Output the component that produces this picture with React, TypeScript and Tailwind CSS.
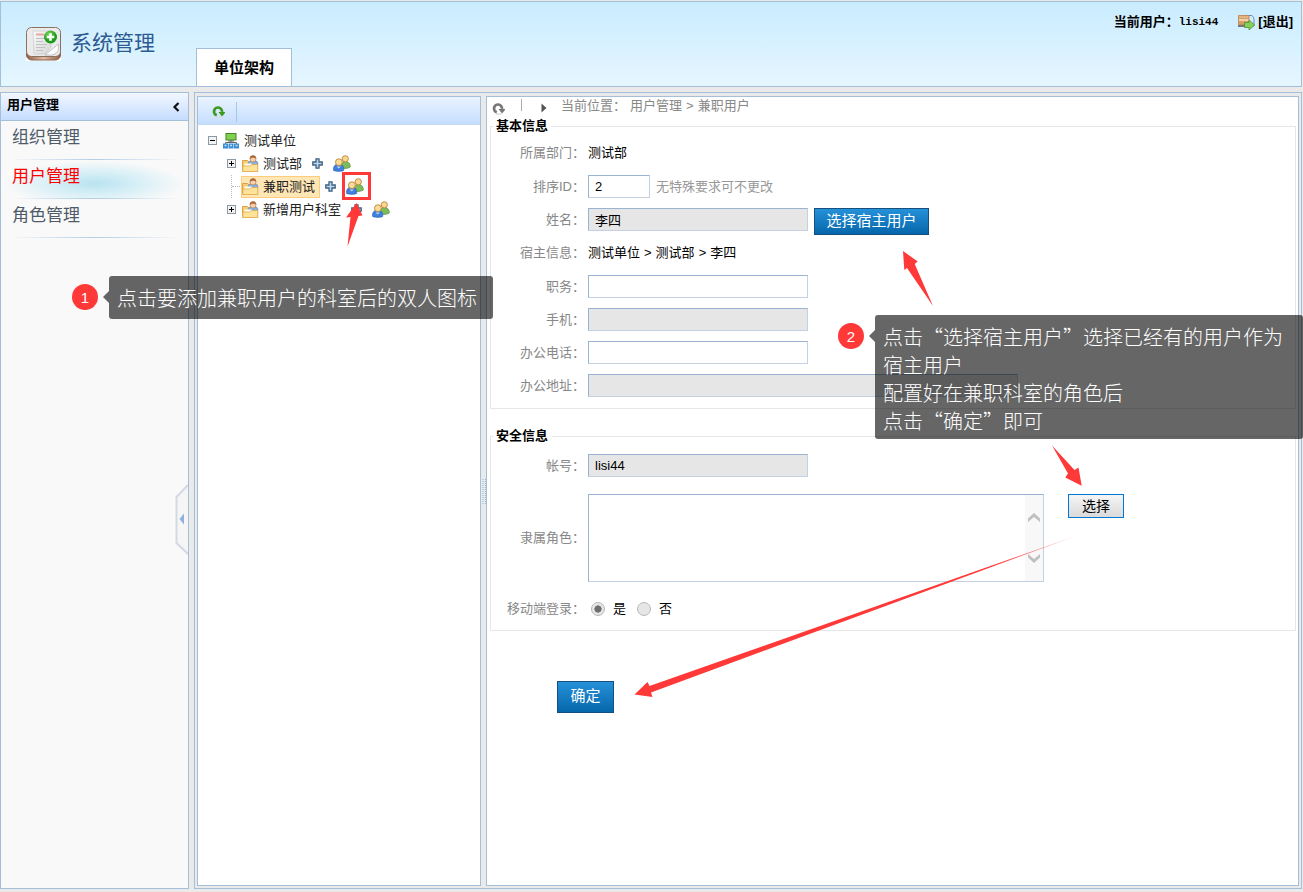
import { useState } from "react";
import type { ReactNode } from "react";

interface TreeNode {
  id: number;
  name: string;
  expandable: boolean;
}

const menu = ["组织管理", "用户管理", "角色管理"];

const departments: TreeNode[] = [
  { id: 1, name: "测试部", expandable: true },
  { id: 2, name: "兼职测试", expandable: false },
  { id: 3, name: "新增用户科室", expandable: true },
];

const inputStyle =
  "h-[23px] border border-t-[#9ab3d0] border-l-[#9ab3d0] border-r-[#c3d1e2] border-b-[#c3d1e2] px-1.5 text-[13px] text-black outline-none read-only:bg-[#e6e6e6]";

const AppLogo = () => (
  <svg width="35" height="34" viewBox="0 0 35 34">
    <defs>
      <linearGradient id="paper" x1="0" y1="0" x2="1" y2="1">
        <stop offset="0" stopColor="#fafafa" />
        <stop offset="1" stopColor="#d6d6d6" />
      </linearGradient>
      <linearGradient id="wood">
        <stop offset="0" stopColor="#8e5f45" />
        <stop offset="0.5" stopColor="#e0bda6" />
        <stop offset="1" stopColor="#8e5f45" />
      </linearGradient>
      <radialGradient id="green" cx="0.4" cy="0.3">
        <stop offset="0" stopColor="#7ddb5c" />
        <stop offset="1" stopColor="#1b9a16" />
      </radialGradient>
    </defs>
    <path d="M0 27h35v7H0z" fill="#fff" />
    <rect x="0.5" y="4" width="34" height="29" rx="5" fill="url(#wood)" stroke="#8e6650" />
    <rect x="0.5" y="0.5" width="34" height="29" rx="5" fill="#ebebeb" stroke="#8d6f60" />
    <path d="M7 4h18v16l-6 7H8z" fill="url(#paper)" stroke="#c4c4c4" strokeWidth="0.6" />
    <path d="M10 7.500h8" stroke="#e8a5a5" strokeWidth="2" />
    <path d="M10 11.500h9M10 14.500h7M10 17.500h11M10 20.500h9M10 23.500h7" stroke="#c2c2c2" />
    <path d="M32.500 17L19 28h7q5.500-1 6.500-6z" fill="#fff" stroke="#ababab" strokeWidth="0.7" />
    <circle cx="24.500" cy="10" r="6.500" fill="url(#green)" />
    <path d="M24.500 6.200v7.600M20.700 10h7.600" stroke="#fff" strokeWidth="2.600" />
  </svg>
);

const LogoutIcon = () => (
  <svg width="17" height="16" viewBox="0 0 17 16">
    <path d="M9 1.500h5q2 1.500 2 4V12H9z" fill="#d6e9fb" stroke="#5f8fc6" />
    <path d="M.5 1.500h10.500v9H.5z" fill="#d9a066" stroke="#b58150" strokeWidth="0.800" />
    <path d="M1 3h9.500" stroke="#eec79b" />
    <path d="M1 6h9.500" stroke="#fff3df" strokeWidth="1.200" />
    <path d="M0 12h9" stroke="#777" strokeWidth="2" />
    <path d="M6.500 8.500H11V6l5.700 5-5.700 5v-2.500H6.500z" fill="#86cf5b" stroke="#4c9130" strokeWidth="0.800" />
  </svg>
);

const RefreshIcon = ({ color }: { color: string }) => (
  <svg width="13" height="13" viewBox="0 0 13 13" fill="none">
    <path d="M3.800 12h6" stroke="#ddd" strokeWidth="1.500" />
    <path d="M4.800 10.300A4 4 0 1 1 10 6.800" stroke={color} strokeWidth="2.700" />
    <path d="M6.500 7h6.500v1L10 11.500z" fill={color} />
  </svg>
);

const ToggleIcon = ({ open }: { open?: boolean }) => (
  <svg width="9" height="9" viewBox="0 0 9 9">
    <rect x="0.500" y="0.500" width="8" height="8" fill="#f3f3f3" stroke="#8d98a5" />
    <path d={open ? "M2 4.500h5" : "M2 4.500h5M4.500 2v5"} stroke="#000" />
  </svg>
);

const OrgIcon = () => (
  <svg width="16" height="16" viewBox="0 0 16 16">
    <rect x="3" y="0.500" width="10" height="6.500" fill="#7ed34b" stroke="#4b7f2c" />
    <path d="M5 8h6M8 7v3M2.500 11V9.500h11V11" fill="none" stroke="#666" />
    <rect x="0" y="10.500" width="5" height="5" fill="#3c8ed2" />
    <rect x="5.500" y="10.500" width="5" height="5" fill="#3c8ed2" />
    <rect x="11" y="10.500" width="5" height="5" fill="#3c8ed2" />
    <path d="M1.500 12.500h2M7 12.500h2M12.500 12.500h2" stroke="#bfe2fb" strokeWidth="1.500" />
  </svg>
);

const DeptIcon = () => (
  <svg width="17" height="17" viewBox="0 0 17 17">
    <path d="M.5 5.500h5l1.500 1.500h8.500v9H.5z" fill="#f7cf70" stroke="#dca045" />
    <path d="M6 9.500c0-3 1.500-4 5-4s5 1 5 4z" fill="#86aede" stroke="#6c8fbd" strokeWidth="0.600" />
    <circle cx="11" cy="4" r="3" fill="#f8cfa8" stroke="#b37648" strokeWidth="0.600" />
    <path d="M7.800 4C7-1 15-1 14.200 4 13.200 2.300 9.500 2.500 7.800 4z" fill="#a9683a" />
    <path d="M2.500 8.500h7.500v4H2.500z" fill="#fffdf3" />
    <path d="M.8 11h7l1.500-1.500h6.500V16.500H.8z" fill="#fde39a" stroke="#e3ab4d" strokeWidth="0.800" />
  </svg>
);

const PlusIcon = () => (
  <svg width="11" height="11" viewBox="0 0 11 11">
    <path
      d="M4 .8h3V4h3.200v3H7v3.200H4V7H.8V4H4z"
      fill="#b9d8f0"
      stroke="#3f5f7d"
      strokeWidth="1.300"
    />
  </svg>
);

const UsersIcon = () => (
  <svg width="18" height="17" viewBox="0 0 18 17">
    <path d="M8.500 13c-1-4 .5-6.500 4-6.500s5 2.500 4.800 5.500c-2 1.500-6 2-8.800 1z" fill="#7dbb5c" stroke="#4f8a35" strokeWidth="0.600" />
    <circle cx="12.300" cy="3.800" r="3.100" fill="#f9d692" stroke="#bb8432" strokeWidth="0.900" />
    <path d="M.6 15.500C0 11.500 2 9 5.700 9s5.600 2.500 5 6.500c-2.700 1.200-7.400 1.200-10.100 0z" fill="#3f7fdd" stroke="#2b5fae" strokeWidth="0.600" />
    <path d="M3.500 11.500l2.200 2 2.200-2z" fill="#b8d4f8" />
    <circle cx="5.900" cy="7.200" r="3.400" fill="#fbdc9c" stroke="#bb8432" strokeWidth="0.900" />
  </svg>
);

const Row = ({
  label,
  htmlFor,
  text,
  children,
}: {
  label: string;
  htmlFor?: string;
  text?: boolean;
  children: ReactNode;
}) => (
  <div className={`flex items-center ${text ? "h-[34px]" : "h-[33px]"}`}>
    <label htmlFor={htmlFor} className="mr-[3px] w-[94px] shrink-0 text-right text-[#888]">
      {label}
    </label>
    {children}
  </div>
);

const Legend = ({ children }: { children: ReactNode }) => (
  <legend className="ml-0.5 px-[3px] leading-[18px] font-bold text-black">{children}</legend>
);

const Header = () => (
  <header className="flex h-[86px] justify-between border border-[#a3bfd9] bg-linear-to-b from-[#c9ecff] to-[#e6f6ff]">
    <div className="flex">
      <div className="flex w-[195px] items-center gap-2.5 pl-[25px]">
        <AppLogo />
        <h1 className="pb-0.5 text-[21px] text-[#2d5a92]">系统管理</h1>
      </div>
      <a
        href="#units"
        className="flex h-[38px] w-24 items-center justify-center self-end border border-b-0 border-[#a3bfd9] bg-white text-[15px] font-bold"
      >
        单位架构
      </a>
    </div>
    <div className="flex h-10 items-center pr-2 font-bold">
      <span>当前用户：</span>
      <span className="font-['Liberation_Mono'] text-[11px]">lisi44</span>
      <a href="#logout" className="ml-5 flex items-center gap-[3px]">
        <LogoutIcon />
        <span>[退出]</span>
      </a>
    </div>
  </header>
);

const Sidebar = () => (
  <aside className="relative w-[189px] shrink-0 border border-[#a3bfd9] bg-[#f9f9f9]">
    <div className="flex h-7 items-center justify-between border-b border-[#a3bfd9] bg-linear-to-b from-[#f2f7ff] to-[#c5ddff] pr-2 pl-1.5 font-bold">
      <h2 className="pb-1">用户管理</h2>
      <button type="button" aria-label="收起菜单">
        <svg width="8" height="10" viewBox="0 0 8 10">
          <path d="M6.500 1L2.500 5l4 4" fill="none" stroke="#111" strokeWidth="2.200" />
        </svg>
      </button>
    </div>
    <ul>
      {menu.map((item) => (
        <li
          key={item}
          className={
            item === "用户管理"
              ? "bg-[radial-gradient(ellipse_at_50%_60%,#b9e3f0_0%,#d9f0f7_35%,transparent_68%)]"
              : ""
          }
        >
          <a
            href="#menu"
            className={`block h-[38px] px-[11px] pt-[5px] text-[17px] leading-6 ${
              item === "用户管理" ? "text-[#f00]" : "text-[#4f5b69]"
            }`}
          >
            {item}
          </a>
          <div className="mx-2 h-px bg-linear-to-r from-transparent via-[#b3cde6] to-transparent" />
        </li>
      ))}
    </ul>
    <svg className="absolute top-[391px] right-0" width="13" height="71" viewBox="0 0 13 71">
      <path d="M13 1L1.500 13v46L13 70" fill="#f5f5f5" stroke="#d3d9e4" strokeWidth="2" />
      <path d="M9 29.500v11L4.500 35z" fill="#8fb0dc" />
    </svg>
  </aside>
);

const UnitTree = () => (
  <section className="w-[284px] shrink-0 border border-[#a3bfd9] bg-white">
    <div className="flex h-7 items-center border-b border-[#c3d9f0] bg-linear-to-b from-[#e9f3ff] to-[#c5deff] pt-0.5 pl-3.5">
      <button type="button" aria-label="刷新">
        <RefreshIcon color="#3d9a1f" />
      </button>
      <div className="ml-[11px] h-5 w-px bg-[#a8c6e6]" />
    </div>
    <div className="pt-1 text-[#222]">
      <div className="flex h-[23px] items-center pl-2.5">
        <ToggleIcon open />
        <span className="ml-1.5">
          <OrgIcon />
        </span>
        <span className="ml-[5px]">测试单位</span>
      </div>
      <ul>
        {departments.map((dept) => (
          <li key={dept.id} className="flex h-[23px] items-center pl-[29px]">
            <div className="w-3.5">
              {dept.expandable ? (
                <ToggleIcon />
              ) : (
                <div className="ml-1 h-[23px] border-l border-dotted border-[#bbb]">
                  <div className="h-3 w-2 border-b border-dotted border-[#bbb]" />
                </div>
              )}
            </div>
            <a
              href="#dept"
              className={`flex h-[22px] items-center gap-1 border pr-1 ${
                dept.id === 2 ? "border-[#ffcb7d] bg-[#ffe6b5]" : "border-transparent"
              }`}
            >
              <DeptIcon />
              {dept.name}
            </a>
            <button type="button" aria-label="添加科室" className="ml-[5px]">
              <PlusIcon />
            </button>
            <button type="button" aria-label="添加兼职用户" className="ml-2.5">
              <UsersIcon />
            </button>
          </li>
        ))}
      </ul>
    </div>
  </section>
);

const Splitter = () => (
  <div className="flex w-[5px] shrink-0 items-center justify-center">
    <svg width="4" height="25" viewBox="0 0 4 25">
      <path d="M1 0v25M3.500 0v25" stroke="#8fb4dc" strokeDasharray="1 1" />
    </svg>
  </div>
);

const UserForm = () => {
  const [order, setOrder] = useState<string>("2");
  const [duty, setDuty] = useState<string>("");
  const [phone, setPhone] = useState<string>("");

  return (
    <main className="min-w-0 flex-1 border border-[#a3bfd9] bg-white">
      <div className="flex h-5 items-center pl-[5px] text-[#888]">
        <button type="button" aria-label="刷新" className="pt-0.5">
          <RefreshIcon color="#777" />
        </button>
        <div className="mb-1 ml-4 h-3 w-px bg-[#aaa]" />
        <svg className="mt-0.5 ml-[19px]" width="6" height="10" viewBox="0 0 6 10">
          <path d="M0.500 0.500L5.500 5l-5 4.500z" fill="#555" />
        </svg>
        <p className="ml-3.5 flex pb-0.5">
          <span>当前位置：</span>
          <span className="ml-1">用户管理</span>
          <span className="mx-1">&gt;</span>
          <span>兼职用户</span>
        </p>
      </div>

      <form className="pr-0.5 pl-[3px]" onSubmit={(e) => e.preventDefault()}>
        <fieldset className="border border-[#e6e6e6] pt-px pb-1.5">
          <Legend>基本信息</Legend>
          <Row label="所属部门：" text>
            测试部
          </Row>
          <Row label="排序ID：" htmlFor="order">
            <input
              id="order"
              className={`w-[62px] ${inputStyle}`}
              value={order}
              onChange={(e) => setOrder(e.target.value)}
            />
            <span className="ml-1.5 text-[#999]">无特殊要求可不更改</span>
          </Row>
          <Row label="姓名：" htmlFor="name">
            <input id="name" className={`w-[220px] ${inputStyle}`} value="李四" readOnly />
            <button
              type="button"
              className="mt-1 ml-1.5 h-[27px] w-[115px] border border-[#15507f] bg-linear-to-b from-[#2591d9] to-[#0567ab] pb-0.5 text-[15px] leading-6 text-white"
            >
              选择宿主用户
            </button>
          </Row>
          <Row label="宿主信息：" text>
            <span>测试单位</span>
            <span className="mx-1">&gt;</span>
            <span>测试部</span>
            <span className="mx-1">&gt;</span>
            <span>李四</span>
          </Row>
          <Row label="职务：" htmlFor="duty">
            <input
              id="duty"
              className={`w-[220px] ${inputStyle}`}
              value={duty}
              onChange={(e) => setDuty(e.target.value)}
            />
          </Row>
          <Row label="手机：" htmlFor="mobile">
            <input id="mobile" className={`w-[220px] ${inputStyle}`} readOnly />
          </Row>
          <Row label="办公电话：" htmlFor="phone">
            <input
              id="phone"
              className={`w-[220px] ${inputStyle}`}
              value={phone}
              onChange={(e) => setPhone(e.target.value)}
            />
          </Row>
          <Row label="办公地址：" htmlFor="address">
            <input id="address" className={`w-[430px] ${inputStyle}`} readOnly />
          </Row>
        </fieldset>

        <fieldset className="mt-[18px] border border-[#e6e6e6] pt-1 pb-[5px]">
          <Legend>安全信息</Legend>
          <Row label="帐号：" htmlFor="account">
            <input id="account" className={`w-[220px] ${inputStyle}`} value="lisi44" readOnly />
          </Row>
          <div className="mt-3 mb-2.5 flex items-center">
            <label htmlFor="roles" className="mr-[3px] w-[94px] shrink-0 text-right text-[#888]">
              隶属角色：
            </label>
            <div className="flex h-[88px] w-[456px] border border-t-[#9ab3d0] border-r-[#c3d1e2] border-b-[#c3d1e2] border-l-[#9ab3d0]">
              <textarea id="roles" className="flex-1 resize-none outline-none" readOnly />
              <div className="flex w-[18px] flex-col items-center justify-between bg-[#f8f8f8] py-[18px]">
                <svg width="12" height="9" viewBox="0 0 12 9">
                  <path d="M0 9V5.500L6 0l6 5.500V9L6 4z" fill="#c0c0c0" />
                </svg>
                <svg width="12" height="9" viewBox="0 0 12 9">
                  <path d="M0 0v3.500L6 9l6-5.500V0L6 5z" fill="#c0c0c0" />
                </svg>
              </div>
            </div>
            <button
              type="button"
              className="ml-6 h-6 w-14 self-start border border-[#0078d7] bg-linear-to-b from-[#f5f5f5] to-[#dadada] text-sm leading-5"
            >
              选择
            </button>
          </div>
          <Row label="移动端登录：">
            {["是", "否"].map((option) => (
              <label key={option} className="mr-2 ml-[3px] flex items-center gap-2">
                <input
                  type="radio"
                  name="mobileLogin"
                  defaultChecked={option === "是"}
                  className="size-3.5 appearance-none rounded-full border border-[#b8b8b8] bg-[#e6e6e6] checked:bg-[radial-gradient(circle_closest-side,#6e6e6e_55%,#e6e6e6_65%)]"
                />
                {option}
              </label>
            ))}
          </Row>
        </fieldset>

        <button
          type="submit"
          className="mt-[50px] ml-[67px] h-8 w-[57px] border border-[#15507f] bg-linear-to-b from-[#2591d9] to-[#0567ab] pb-0.5 text-[15px] text-white"
        >
          确定
        </button>
      </form>
    </main>
  );
};

const Callout = ({ step, children }: { step: number; children: ReactNode }) => (
  <div className="flex">
    <span className="mt-2 flex size-[26px] shrink-0 items-center justify-center rounded-full bg-[#ff3838] text-[15px] leading-none text-white">
      {step}
    </span>
    <svg className="mt-[15px] ml-[5px] shrink-0" width="6" height="12" viewBox="0 0 6 12">
      <path d="M6 0v12L0 6z" fill="#000" fillOpacity="0.6" />
    </svg>
    <p className="min-h-[43px] flex-1 rounded-[3px] bg-black/60 px-2 pt-2 pb-1 font-['Noto_Sans_CJK_SC',sans-serif] text-xl leading-7 font-light text-white">
      {children}
    </p>
  </div>
);

const Arrows = () => (
  <svg
    className="pointer-events-none absolute top-0 left-0"
    width="1303"
    height="892"
    viewBox="0 0 1303 892"
    fill="#ff3838"
  >
    <defs>
      <linearGradient id="fade">
        <stop offset="0.800" stopColor="#ff3838" />
        <stop offset="1" stopColor="#ff3838" stopOpacity="0.300" />
      </linearGradient>
    </defs>
    <rect x="343.500" y="173.500" width="26" height="25" fill="none" stroke="#ff3838" strokeWidth="3" />
    <path d="M356.500 203L362.500 215.500 358.500 216 347.500 246.500 350.500 217 346 217.500z" />
    <path d="M903 251L917.700 261.500 914.700 264 933 306 907 268 904.300 270z" />
    <path d="M1052 445.500L1074.500 470 1078.500 467.500 1081.700 485.700 1065.300 477.500 1068 473.500z" />
    <path d="M634.500 694.500L647.500 682 649.500 686 1078.500 535 651 692.500 652.500 697z" fill="url(#fade)" />
  </svg>
);

export default function App() {
  return (
    <div
      lang="zh-CN"
      className="relative flex min-h-screen flex-col gap-[5px] overflow-hidden bg-[#eaeaea] pt-px pr-px pb-[3px] font-['Liberation_Sans','Noto_Sans_CJK_SC',sans-serif] text-[13px] leading-[18px] text-black"
    >
      <Header />
      <div className="flex flex-1 gap-[5px]">
        <Sidebar />
        <div className="flex min-w-0 flex-1 border border-[#a3bfd9] px-0.5 pt-[3px] pb-0.5">
          <UnitTree />
          <Splitter />
          <UserForm />
        </div>
      </div>

      <Arrows />
      <div className="absolute top-[276px] left-[72px] w-[421px]">
        <Callout step={1}>点击要添加兼职用户的科室后的双人图标</Callout>
      </div>
      <div className="absolute top-[315px] left-[838px] w-[465px]">
        <Callout step={2}>
          点击“选择宿主用户”选择已经有的用户作为宿主用户
          <br />
          配置好在兼职科室的角色后
          <br />
          点击“确定”即可
        </Callout>
      </div>
    </div>
  );
}
